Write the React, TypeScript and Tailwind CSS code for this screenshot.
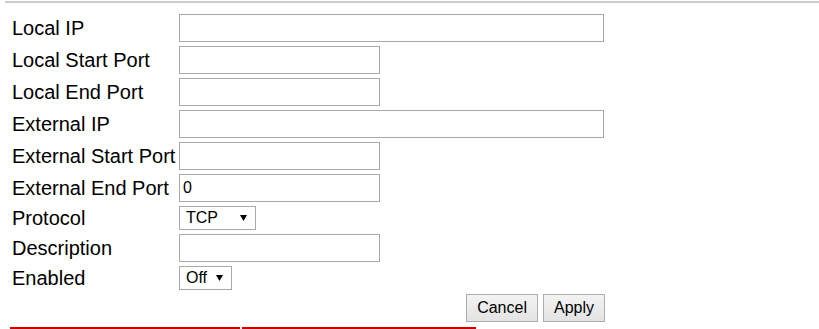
import { ReactNode } from "react";

const font = "font-['Liberation_Sans',Arial,sans-serif]";

function Arrow() {
  return (
    <svg
      className="pointer-events-none absolute top-[9px]"
      width="7"
      height="6"
      viewBox="0 0 7 6"
    >
      <path d="M0 0 H7 L3.5 6 Z" fill="#000" />
    </svg>
  );
}

function TextInput({ wide, value = "" }: { wide?: boolean; value?: string }) {
  return (
    <input
      type="text"
      defaultValue={value}
      className={`h-[28px] ${wide ? "w-[425px]" : "w-[201px]"} border border-[#a9a9a9] bg-white px-[3px] text-[16px] text-black outline-none ${font}`}
    />
  );
}

function Select({ width, arrowLeft, options }: { width: string; arrowLeft: string; options: string[] }) {
  return (
    <div className={`relative h-[24px] ${width}`}>
      <select
        className={`h-full w-full appearance-none rounded-none border border-[#a9a9a9] bg-white pl-[6px] text-[16px] leading-[22px] text-black outline-none ${font}`}
      >
        {options.map((o) => (
          <option key={o}>{o}</option>
        ))}
      </select>
      <span className={`absolute top-0 ${arrowLeft}`}>
        <Arrow />
      </span>
    </div>
  );
}

function Row({ label, children }: { label: string; children: ReactNode }) {
  return (
    <div className="flex items-center">
      <label className="w-[167px] shrink-0 text-[20px] leading-[23px] text-black">{label}</label>
      {children}
    </div>
  );
}

function Btn({ children }: { children: ReactNode }) {
  return (
    <button className="h-[28px] border border-[#adadad] bg-gradient-to-b from-[#f3f3f3] to-[#e3e3e3] px-[10px] text-[16px] leading-[26px] text-black">
      {children}
    </button>
  );
}

export default function App() {
  return (
    <main className={`min-h-screen bg-white ${font}`}>
      <div className="ml-[5px] mt-px h-[2px] bg-[#cccccc]" />

      <form className="ml-[12px] mt-[11px] flex w-[593px] flex-col gap-[4px]">
        <Row label="Local IP">
          <TextInput wide />
        </Row>
        <Row label="Local Start Port">
          <TextInput />
        </Row>
        <Row label="Local End Port">
          <TextInput />
        </Row>
        <Row label="External IP">
          <TextInput wide />
        </Row>
        <Row label="External Start Port">
          <TextInput />
        </Row>
        <Row label="External End Port">
          <TextInput value="0" />
        </Row>
        <Row label="Protocol">
          <Select width="w-[77px]" arrowLeft="left-[61px]" options={["TCP", "UDP", "Both"]} />
        </Row>
        <Row label="Description">
          <TextInput />
        </Row>
        <Row label="Enabled">
          <Select width="w-[53px]" arrowLeft="left-[37px]" options={["Off", "On"]} />
        </Row>
        <div className="flex justify-end gap-[5px]">
          <Btn>Cancel</Btn>
          <Btn>Apply</Btn>
        </div>
      </form>

      {/* tab underline */}
      <div className="ml-[10px] mt-[5px] flex gap-[2px]">
        <div className="h-[3px] w-[230px] bg-[#cc0000]" />
        <div className="h-[3px] w-[234px] bg-[#cc0000]" />
      </div>
    </main>
  );
}
